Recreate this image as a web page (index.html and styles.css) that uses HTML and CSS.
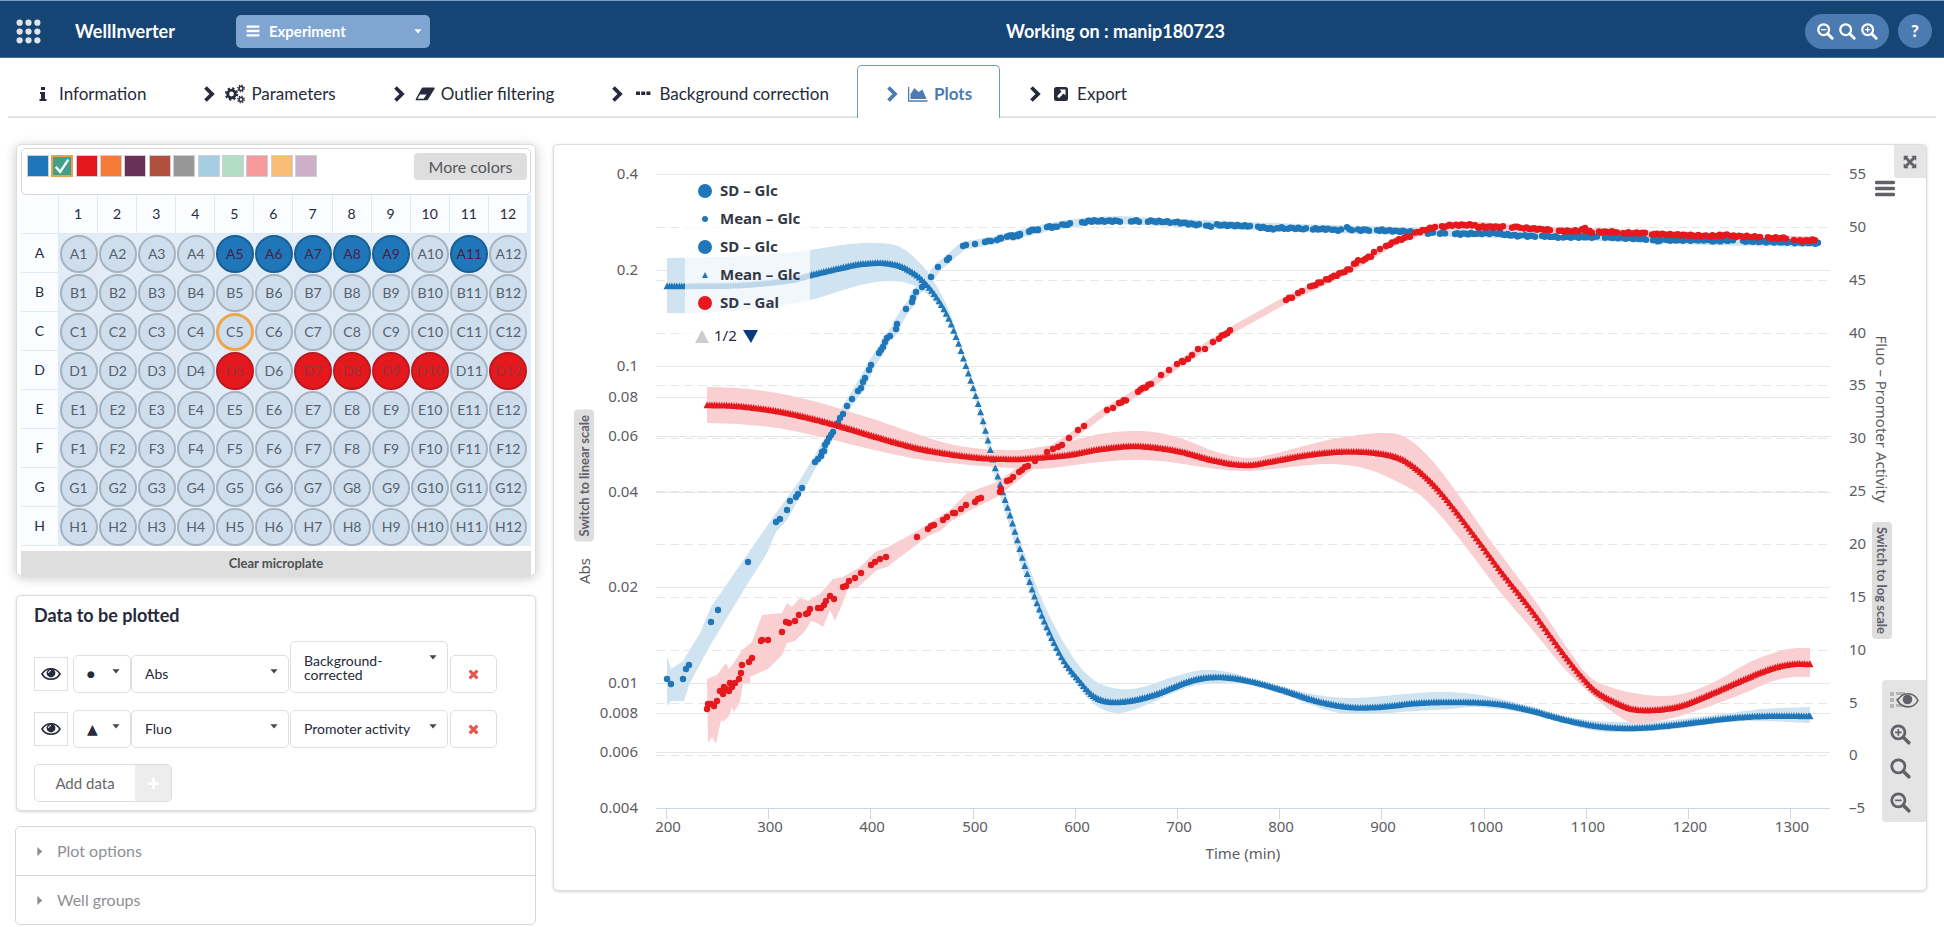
FILE: index.html
```html
<!DOCTYPE html>
<html lang="en">
<head>
<meta charset="utf-8">
<title>WellInverter</title>
<link rel="stylesheet" href="styles.css">
</head>
<body>
<svg class="sprite" aria-hidden="true">
  <symbol id="i-chevron" viewBox="0 0 20 20"><path d="M6.500 3.500l6.500 6.500-6.500 6.500" fill="none" stroke="currentColor" stroke-width="3.800"/></symbol>
  <symbol id="i-info" viewBox="0 0 20 20"><path d="M8 3h4v3H8zM7 8h5v7h1.500v2h-7v-2H8v-5H7z" fill="currentColor"/></symbol>
  <symbol id="i-gears" viewBox="0 0 20 20"><g fill="none" stroke="currentColor"><circle cx="6.500" cy="10" r="3.800" stroke-width="2.800"/><circle cx="6.500" cy="10" r="5.700" stroke-width="2" stroke-dasharray="2.240"/><circle cx="16" cy="4.500" r="2" stroke-width="1.500"/><circle cx="16" cy="4.500" r="3.300" stroke-width="1.300" stroke-dasharray="1.300"/><circle cx="16" cy="15.500" r="2" stroke-width="1.500"/><circle cx="16" cy="15.500" r="3.300" stroke-width="1.300" stroke-dasharray="1.300"/></g></symbol>
  <symbol id="i-eraser" viewBox="0 0 20 20"><path d="M8 3.500h11c.8 0 1 .8.600 1.300L13 15.500c-.4.600-.8.800-1.400.8H1.400c-.8 0-1-.8-.6-1.300L6.700 4.200c.3-.5.700-.7 1.300-.7z" fill="currentColor"/><path d="M5 10.500h6.500l-2.800 4.200H2.400z" fill="#fff"/></symbol>
  <symbol id="i-dots" viewBox="0 0 20 20"><path d="M3 7.500h4v3.500H3zM8.200 7.500h4v3.500h-4zM13.400 7.500h4v3.500h-4z" fill="currentColor"/></symbol>
  <symbol id="i-area" viewBox="0 0 20 20"><path d="M.5 3v14h19" fill="none" stroke="currentColor" stroke-width="1.500"/><path d="M2.500 15V10l4-6 4 4 4-2.500 4 9.500z" fill="currentColor"/></symbol>
  <symbol id="i-export" viewBox="0 0 20 20"><rect x="3" y="3" width="14" height="14" rx="2.500" fill="currentColor"/><path d="M8.500 5.500h6v6l-2-2-4.500 4.800-2-2L10.500 7.500z" fill="#fff"/></symbol>
  <symbol id="i-search" viewBox="0 0 20 20"><g fill="none" stroke="currentColor"><circle cx="8.500" cy="8.500" r="6" stroke-width="2.500"/><path d="M13 13l5 5" stroke-width="3.200" stroke-linecap="round"/></g></symbol>
  <symbol id="i-zoomout" viewBox="0 0 20 20"><g fill="none" stroke="currentColor"><circle cx="8.500" cy="8.500" r="6" stroke-width="2.500"/><path d="M13 13l5 5" stroke-width="3.200" stroke-linecap="round"/><path d="M5.500 8.500h6" stroke-width="1.500"/></g></symbol>
  <symbol id="i-zoomin" viewBox="0 0 20 20"><g fill="none" stroke="currentColor"><circle cx="8.500" cy="8.500" r="6" stroke-width="2.500"/><path d="M13 13l5 5" stroke-width="3.200" stroke-linecap="round"/><path d="M5.500 8.500h6M8.500 5.500v6" stroke-width="1.500"/></g></symbol>
  <symbol id="i-expand" viewBox="0 0 20 20"><path d="M3 3h5.500L7 4.800l3 3 3-3L11.500 3H17v5.500L15.200 7l-3 3 3 3 1.800-1.500V17h-5.500l1.500-1.800-3-3-3 3L8.500 17H3v-5.500L4.800 13l3-3-3-3L3 8.500z" fill="currentColor"/></symbol>
  <symbol id="i-eye" viewBox="0 0 20 20"><path d="M1 10c4-7 14-7 18 0-4 7-14 7-18 0z" fill="none" stroke="currentColor" stroke-width="1.600"/><circle cx="10" cy="9" r="4.400" fill="currentColor"/><path d="M7.500 9a2.500 2.500 0 0 1 2.500-2.500" fill="none" stroke="#fff"/></symbol>
  <symbol id="i-cross" viewBox="0 0 20 20"><path d="M4 4l12 12M16 4L4 16" fill="none" stroke="currentColor" stroke-width="4.800"/></symbol>
  <symbol id="i-plus" viewBox="0 0 20 20"><path d="M10 3v14M3 10h14" fill="none" stroke="currentColor" stroke-width="4.200"/></symbol>
  <symbol id="i-check" viewBox="0 0 20 20"><path d="M3 11l5 5.500L17 3" fill="none" stroke="currentColor" stroke-width="2.600"/></symbol>
  <symbol id="i-bars" viewBox="0 0 20 20"><path d="M2 4.500h16M2 10h16M2 15.500h16" stroke="currentColor" stroke-width="3"/></symbol>
  <symbol id="i-menu" viewBox="0 0 20 20"><path d="M1.500 3.500h17M1.500 9.500h17M1.500 15.500h17" stroke="currentColor" stroke-width="3.400" stroke-linecap="round"/></symbol>
  <symbol id="i-caret" viewBox="0 0 20 20"><path d="M4 7h12l-6 7z" fill="currentColor"/></symbol>
  <symbol id="i-caret-right" viewBox="0 0 20 20"><path d="M6 2v16l9-8z" fill="currentColor"/></symbol>
  <symbol id="i-grid" viewBox="0 0 24 24"><g fill="currentColor"><circle cx="3.500" cy="3.500" r="3"/><circle cx="12" cy="3.500" r="3"/><circle cx="20.500" cy="3.500" r="3"/><circle cx="3.500" cy="12" r="3"/><circle cx="12" cy="12" r="3"/><circle cx="20.500" cy="12" r="3"/><circle cx="3.500" cy="20.500" r="3"/><circle cx="12" cy="20.500" r="3"/><circle cx="20.500" cy="20.500" r="3"/></g></symbol>
  <symbol id="i-legend" viewBox="0 0 30 18"><path d="M1 1h4v4H1zM1 7h4v4H1zM1 13h4v4H1zM7 1h9v3H7zM7 7h4v3H7zM7 13h9v3H7z" fill="#b5b5b5"/><path d="M8.500 9.500c5-9 16-9 20.500 0-4.500 8.500-15.500 8.500-20.500 0z" fill="#e4e4e4" stroke="currentColor" stroke-width="1.600"/><circle cx="18.500" cy="8.500" r="4.800" fill="currentColor"/></symbol>
</svg>

<header class="topbar">
  <button class="apps" aria-label="Applications"><svg><use href="#i-grid"/></svg></button>
  <span class="brand">WellInverter</span>
  <button class="experiment" aria-haspopup="menu"><svg class="icon-s"><use href="#i-bars"/></svg><span>Experiment</span><svg class="icon-s caret"><use href="#i-caret"/></svg></button>
  <h1 class="title">Working on : manip180723</h1>
  <div class="zoom-pill">
    <button aria-label="Zoom out"><svg><use href="#i-zoomout"/></svg></button>
    <button aria-label="Reset zoom"><svg><use href="#i-search"/></svg></button>
    <button aria-label="Zoom in"><svg><use href="#i-zoomin"/></svg></button>
  </div>
  <button class="help" aria-label="Help">?</button>
</header>

<nav class="tabs">
  <a href="#information"><svg><use href="#i-info"/></svg>Information</a>
  <a href="#parameters"><svg><use href="#i-chevron"/></svg><svg><use href="#i-gears"/></svg>Parameters</a>
  <a href="#outliers"><svg><use href="#i-chevron"/></svg><svg><use href="#i-eraser"/></svg>Outlier filtering</a>
  <a href="#background"><svg><use href="#i-chevron"/></svg><svg><use href="#i-dots"/></svg>Background correction</a>
  <a href="#plots" class="active" aria-current="page"><svg><use href="#i-chevron"/></svg><svg><use href="#i-area"/></svg>Plots</a>
  <a href="#export"><svg><use href="#i-chevron"/></svg><svg><use href="#i-export"/></svg>Export</a>
</nav>

<main class="layout">
  <div class="sidebar">
    <section class="card plate-card">
      <div class="palette">
        <div class="swatches" id="swatches"></div>
        <button class="more">More colors</button>
      </div>
      <table class="plate" id="plate"></table>
      <button class="clear">Clear microplate</button>
    </section>

    <section class="card data-card">
      <h2>Data to be plotted</h2>
      <div class="data-row">
        <button class="eye" aria-label="Toggle Abs"><svg><use href="#i-eye"/></svg></button>
        <div class="drop shape"><select aria-label="Abs symbol"><option>●</option><option>▲</option></select><svg><use href="#i-caret"/></svg></div>
        <div class="drop"><select aria-label="First data type"><option>Abs</option><option>Fluo</option></select><svg><use href="#i-caret"/></svg></div>
        <div class="drop tall"><select aria-label="First data quantity"><option>Background-corrected</option><option>Promoter activity</option></select><span aria-hidden="true">Background-corrected</span><svg><use href="#i-caret"/></svg></div>
        <button class="remove" aria-label="Remove Abs"><svg><use href="#i-cross"/></svg></button>
      </div>
      <div class="data-row">
        <button class="eye" aria-label="Toggle Fluo"><svg><use href="#i-eye"/></svg></button>
        <div class="drop shape triangle"><select aria-label="Fluo symbol"><option>▲</option><option>●</option></select><svg><use href="#i-caret"/></svg></div>
        <div class="drop"><select aria-label="Second data type"><option>Fluo</option><option>Abs</option></select><svg><use href="#i-caret"/></svg></div>
        <div class="drop"><select aria-label="Second data quantity"><option>Promoter activity</option></select><svg><use href="#i-caret"/></svg></div>
        <button class="remove" aria-label="Remove Fluo"><svg><use href="#i-cross"/></svg></button>
      </div>
      <button class="add"><span>Add data</span><span class="add-icon"><svg><use href="#i-plus"/></svg></span></button>
    </section>

    <section class="accordion">
      <button aria-expanded="false"><svg><use href="#i-caret-right"/></svg>Plot options</button>
      <button aria-expanded="false"><svg><use href="#i-caret-right"/></svg>Well groups</button>
    </section>
  </div>

  <section class="card chart-card">
    <svg class="chart" id="chart" viewBox="554 145 1372 745" role="img" aria-label="Abs and promoter activity against time"></svg>
    <button class="expand" aria-label="Full screen"><svg><use href="#i-expand"/></svg></button>
    <button class="menu" aria-label="Chart menu"><svg><use href="#i-menu"/></svg></button>
    <button class="scale scale-left">Switch to linear scale</button>
    <button class="scale scale-right">Switch to log scale</button>
    <div class="tools">
      <button class="wide" aria-label="Show or hide legend"><svg><use href="#i-legend"/></svg></button>
      <button aria-label="Zoom in chart"><svg><use href="#i-zoomin"/></svg></button>
      <button aria-label="Reset chart zoom"><svg><use href="#i-search"/></svg></button>
      <button aria-label="Zoom out chart"><svg><use href="#i-zoomout"/></svg></button>
    </div>
  </section>
</main>
<script src="script.js"></script>
</body>
</html>
```

FILE: styles.css
```css
* { box-sizing: border-box; }
body { margin: 0; background: #fff; color: #262a3a; font: 17px/20px Lato, "Open Sans", sans-serif; }
button { font: inherit; color: inherit; border: 0; background: none; padding: 0; cursor: pointer; }
.sprite { position: absolute; width: 0; height: 0; }
h1, h2 { margin: 0; }

.topbar { position: relative; display: flex; align-items: center; height: 58px; padding: 4px 12px 0 16px; background: #154475; border-top: 1px solid #7f9fb9; border-bottom: 1px solid #4c6d8c; color: #fff; }
.apps svg { display: block; width: 25px; height: 25px; color: #dde4ea; }
.brand { margin-left: 34px; font-size: 18px; font-weight: 700; }
.experiment { display: flex; align-items: center; gap: 8px; width: 194px; height: 33px; margin-left: 61px; padding: 0 6px 0 9px; border-radius: 5px; background: #7fa5d0; font-size: 15px; font-weight: 700; }
.icon-s { width: 16px; height: 16px; }
.experiment .caret { width: 12px; height: 12px; margin-left: auto; }
.title { position: absolute; left: 0; right: 0; margin-left: 287px; text-align: center; font-size: 18px; line-height: 20px; pointer-events: none; }
.zoom-pill { display: flex; align-items: center; justify-content: center; gap: 4px; width: 84px; height: 35px; margin-left: auto; border-radius: 18px; background: #4b7bb0; }
.zoom-pill svg { display: block; width: 18px; height: 18px; }
.help { width: 34px; height: 34px; margin-left: 9px; border-radius: 50%; background: #4b7bb0; font-size: 17px; font-weight: 900; }

.tabs { display: flex; margin: 7px 8px 0; border-bottom: 2px solid #e2e3e5; }
.tabs a { display: flex; align-items: center; gap: 6px; height: 53px; margin-bottom: -2px; padding: 3px 27px 0 24px; border: 1px solid transparent; border-bottom: 0; color: #262a3a; text-decoration: none; }
.tabs svg { width: 20px; height: 20px; flex: none; }
.tabs .active { border-color: #6f9bc6; border-radius: 5px 5px 0 0; background: #fff; color: #4b7bb0; font-weight: 700; }

.layout { display: grid; grid-template-columns: 520px minmax(0, 1fr); align-items: start; gap: 17px; padding: 26px 17px 0 16px; }
.sidebar { display: flex; flex-direction: column; }
.card { border: 1px solid #dcdddf; border-radius: 5px; background: #fff; box-shadow: 0 1px 3px #d4d4d5; }

.plate-card { padding: 3px 4px 0; box-shadow: 0 2px 12px #c9c9cb; }
.palette { display: flex; justify-content: space-between; align-items: flex-start; height: 47px; padding: 4px 3px 0 5px; border: 1px solid #d4d6da; border-radius: 5px; }
.swatches { display: flex; justify-content: space-between; width: 290px; padding-top: 2px; }
.swatches button { width: 22px; height: 22px; border: 1px solid #cfcfdc; color: #fff; background: var(--c); }
.swatches .on { border: 2px solid #e9a04c; }
.swatches svg { display: block; width: 18px; height: 18px; }
.more { width: 113px; height: 27px; border-radius: 4px; background: #dededf; color: #55565a; font-size: 16px; }
.plate { width: 100%; border-collapse: separate; border-spacing: 0; border-right: 3px solid #e2ecf6; table-layout: fixed; background: #e2ecf6; font-size: 14px; }
.plate th { height: 39px; padding: 0; border-bottom: 1px solid #dfe9f3; border-right: 1px solid #dfe9f3; background: #fbfcff; font-weight: 400; }
.plate th:first-child { width: 38px; }
.plate td { height: 39px; padding: 0; text-align: center; }
.well { display: block; width: 38px; height: 38px; margin: auto; border: 2px solid #a5b2bf; border-radius: 50%; background: #cfdeec; color: #56616d; font-size: 14px; line-height: 20px; }
.well.blue { border-color: #175f95; background: #1f77b9; color: #4d1c45; }
.well.red { border-color: #b91a20; background: #e5191d; color: #96343a; }
.well.hover { border: 3px solid #eda64e; }
.clear { display: block; width: 100%; height: 24px; margin-top: 5px; background: #dededf; color: #4f5053; font-size: 13px; font-weight: 700; }

.data-card { margin-top: 19px; padding: 8px 17px 8px; }
.data-card h2 { font-size: 18px; line-height: 22px; }
.data-row { display: flex; align-items: flex-end; height: 52px; margin-top: 3px; }
h2 + .data-row { margin-top: 15px; }
.eye { width: 34px; height: 34px; margin: 0 5px 2px 0; border: 1px solid #dedfe1; }
.eye svg { display: block; width: 20px; height: 20px; margin: auto; }
.drop { position: relative; width: 158px; height: 38px; font-size: 14px; margin-right: 1px; }
.drop.shape { width: 58px; margin-right: 0; }
.drop select { width: 100%; height: 100%; padding: 0 13px; border: 1px solid #dedfe1; border-radius: 5px; background: none; color: #262a3a; font: inherit; appearance: none; }
.shape select { font: 9px "DejaVu Sans", sans-serif; }
.triangle select { font-size: 14px; }
.drop svg { position: absolute; right: 9px; top: 10px; width: 12px; height: 12px; color: #444750; pointer-events: none; }
.drop.tall { height: 52px; }
.drop.tall select { color: transparent; }
.tall span { position: absolute; left: 14px; right: 46px; top: 13px; line-height: 14px; pointer-events: none; }
.remove { width: 47px; height: 38px; margin-left: 1px; border: 1px solid #dedfe1; border-radius: 5px; }
.remove svg { display: block; width: 13px; height: 13px; margin: auto; color: #e3574f; }
.add { display: flex; width: 138px; height: 38px; margin-top: 16px; border: 1px solid #dcdddf; border-radius: 5px; color: #66676b; font-size: 15px; overflow: hidden; }
.add > span { flex: 1; align-self: center; }
.add .add-icon { display: grid; place-items: center; flex: 0 0 36px; align-self: stretch; background: #ededee; color: #fff; }
.add-icon svg { width: 15px; height: 15px; }

.accordion { margin: 15px 0 0 -1px; border: 1px solid #d6d7d9; border-radius: 5px; }
.accordion button { display: flex; align-items: center; gap: 12px; width: 100%; height: 48px; padding-left: 18px; color: #8e8f93; font-size: 16px; }
.accordion button + button { height: 49px; border-top: 1px solid #d6d7d9; }
.accordion svg { width: 11px; height: 11px; }

.chart-card { position: relative; }
.chart { display: block; width: 100%; height: auto; }
.chart-card button { color: #606268; }
.expand { position: absolute; top: 0; right: 0; width: 32px; height: 33px; border-radius: 0 4px 0 4px; background: #e5e5e6; }
.expand svg { display: block; width: 18px; height: 18px; margin: auto; }
.menu { position: absolute; top: 34px; right: 30px; }
.menu svg { display: block; width: 22px; height: 20px; }
.scale { position: absolute; padding: 5px 0; border-radius: 4px; background: #dededf; writing-mode: vertical-rl; font-size: 13px; font-weight: 700; line-height: 20px; }
.scale-left { left: 20px; top: 265px; transform: rotate(180deg); }
.scale-right { right: 34px; top: 377px; }
.tools { position: absolute; right: 0; bottom: 68px; display: flex; flex-direction: column; gap: 12px; width: 44px; padding: 9px 7px; border-radius: 4px 0 0 4px; background: #e4e4e5; }
.tools button { width: 22px; height: 22px; }
.tools .wide { width: 30px; }
.tools svg { display: block; width: 22px; height: 22px; }
.tools .wide svg { width: 30px; height: 20px; }

.label { fill: #5c5d61; font: 15px "Noto Sans", sans-serif; }
.end { text-anchor: end; }
.mid { text-anchor: middle; }
.legend { fill: #333845; font: 700 15px "Noto Sans", sans-serif; }
.page { fill: #262a3a; font: 15px "Noto Sans", sans-serif; }
.blue-fill { fill: #1f77b9; }
.red-fill { fill: #e5191d; }
.blue-band { fill: #cfe3f1; }
.red-band { fill: #f9cfd1; }
.blue-thread { fill: none; stroke: #cfe3f1; stroke-width: 8; }
.red-thread { fill: none; stroke: #f9cfd1; stroke-width: 7; }
.grid { stroke: #e6e6e6; stroke-width: 1; }
.dash { stroke-dasharray: 9 5; }
.axis { stroke: #ccd6eb; stroke-width: 1; }
```

FILE: script.js
```js
/* Palette */
const colors = ['#1f77b9', '#40a08a', '#e5191d', '#f57c36', '#6a3157', '#b0503f', '#979797', '#a5cee3', '#b2dec6', '#f69a9b', '#f8bd74', '#cdb0c8'];
document.getElementById('swatches').innerHTML = colors.map((c, i) =>
  `<button style="--c:${c}" aria-label="Color ${i + 1}"${i === 1 ? ' class="on"' : ''}>${i === 1 ? '<svg><use href="#i-check"/></svg>' : ''}</button>`).join('');

/* Microplate */
const state = { C5: 'hover' };
['A5', 'A6', 'A7', 'A8', 'A9', 'A11'].forEach(w => { state[w] = 'blue'; });
['D5', 'D7', 'D8', 'D9', 'D10', 'D12'].forEach(w => { state[w] = 'red'; });
const cols = Array.from({ length: 12 }, (_, i) => i + 1);
document.getElementById('plate').innerHTML =
  `<thead><tr><th></th>${cols.map(c => `<th scope="col">${c}</th>`).join('')}</tr></thead><tbody>` +
  [...'ABCDEFGH'].map(r => `<tr><th scope="row">${r}</th>${cols.map(c =>
    `<td><button class="well ${state[r + c] || ''}">${r}${c}</button></td>`).join('')}</tr>`).join('') + '</tbody>';

/* Chart */
const chart = document.getElementById('chart');
const out = [];
const line = (x1, y1, x2, y2, c) => out.push(`<line x1="${x1}" y1="${y1}" x2="${x2}" y2="${y2}" class="${c}"/>`);
const text = (x, y, s, c, extra = '') => out.push(`<text x="${x}" y="${y}" class="${c}" ${extra}>${s}</text>`);

[['0.4', 174], ['0.2', 270], ['0.1', 366], ['0.08', 397], ['0.06', 436], ['0.04', 492], ['0.02', 587], ['0.01', 683], ['0.008', 713], ['0.006', 752], ['0.004', 808]]
  .forEach(([s, y]) => { if (y < 808) line(656, y + .5, 1830, y + .5, 'grid'); text(638, y + 5, s, 'label end'); });
for (let i = 0; i <= 12; i++) {
  const y = Math.round(174 + i * 52.85);
  if (i && i < 12) line(656, y + .5, 1830, y + .5, 'grid dash');
  text(1849, y + 5, String(55 - 5 * i).replace('-', '–'), 'label');
}
line(656, 808.5, 1830, 808.5, 'axis');
for (let i = 0; i < 12; i++) {
  const x = Math.round(666 + i * 102.2);
  line(x + .5, 808, x + .5, 819, 'axis');
  text(x + 2, 832, 200 + 100 * i, 'label mid');
}
text(1243, 859, 'Time (min)', 'label mid');
text(0, 0, 'Abs', 'label mid', 'transform="translate(590 571) rotate(-90)"');
text(0, 0, 'Fluo – Promoter Activity', 'label mid', 'transform="translate(1876 419) rotate(90)"');

/* Smooth interpolation through sorted points */
function curve(pts) {
  const m = pts.map((p, i) => {
    const a = pts[Math.max(0, i - 1)], b = pts[Math.min(pts.length - 1, i + 1)];
    return (b[1] - a[1]) / (b[0] - a[0]);
  });
  return x => {
    let i = 0;
    while (i < pts.length - 2 && x > pts[i + 1][0]) i++;
    const [x0, y0] = pts[i], [x1, y1] = pts[i + 1], h = x1 - x0, t = (x - x0) / h;
    return (2 * t ** 3 - 3 * t ** 2 + 1) * y0 + (t ** 3 - 2 * t ** 2 + t) * h * m[i] + (-2 * t ** 3 + 3 * t ** 2) * y1 + (t ** 3 - t ** 2) * h * m[i + 1];
  };
}
const pairs = s => s.split(' ').map(p => p.split(',').map(Number));
function sample(pts, step) {
  const f = curve(pts), end = pts[pts.length - 1][0], res = [];
  for (let x = pts[0][0]; x < end; x += step) res.push([x, f(x)]);
  res.push(pts[pts.length - 1]);
  return res;
}
const join = pts => pts.map(p => p[0].toFixed(1) + ',' + p[1].toFixed(1)).join(' ');
const band = (up, low, c) => out.push(`<polygon class="${c}" points="${join(sample(pairs(up), 3))} ${join(sample(pairs(low), 3).reverse())}"/>`);
const poly = (s, c) => out.push(`<polygon class="${c}" points="${s}"/>`);
const triangles = (s, c) => out.push(`<path class="${c}" d="${sample(pairs(s), 2.45).map(([x, y]) => `M${x.toFixed(1)} ${(y - 3.6).toFixed(1)}l3.500 6.800h-7z`).join('')}"/>`);
function dots(points, runs, c) {
  const all = pairs(points);
  runs.forEach(([x1, y1, x2, y2], k) => {
    const n = Math.max(1, Math.round((x2 - x1) / 2.6));
    for (let i = 0; i <= n; i++) all.push([x1 + (x2 - x1) * i / n, y1 + (y2 - y1) * i / n + Math.sin(i * 2.3 + k) * .8]);
  });
  out.push(all.map(p => `<circle cx="${p[0].toFixed(1)}" cy="${p[1].toFixed(1)}" r="3.200" class="${c}"/>`).join(''));
}

const absBlue = '667,679 671,684 683,679 686,669 689,665 711,622 718,610 748,562 776,522 780,519 787,510 790,501 796,497 798,494 802,488 815,462 818,459 821,456 822,452 824,451 825,445 827,442 829,438 831,435 833,432 838,423 840,418 843,414 847,406 852,399 858,391 861,388 863,382 865,378 869,370 871,365 879,353 881,350 883,347 885,342 887,338 890,336 896,329 897,324 906,309 912,302 913,298 916,292 922,287 931,277 938,267 947,260 949,258 963,246 966,245 975,244 985,242 988,241 991,241 997,240 1001,238 1009,236 1013,237 1018,236 1020,234 1030,231 1034,230 1038,230';
const absRed = '707,709 708,704 711,704 714,706 717,701 720,691 723,694 724,687 726,689 729,691 730,683 732,687 735,683 739,679 741,673 742,665 749,662 752,658 761,641 762,640 768,640 782,632 786,622 789,623 795,621 799,615 806,614 808,613 810,609 818,608 821,608 824,605 826,601 830,596 834,599 843,587 846,586 849,581 855,578 861,573 871,565 875,562 880,559 886,557 917,537 928,529 931,526 934,525 943,520 947,517 953,513 955,513 961,509 966,505 975,502 978,499 981,498 1000,492 1001,489 1007,481 1010,480 1013,477 1019,472 1022,470 1025,467 1028,466 1035,461 1047,452 1053,449 1058,447 1062,445 1069,438 1078,430 1084,426 1107,410 1113,408 1161,375 1169,370 1177,364 1182,361 1183,362 1188,359 1192,355 1198,349 1205,349 1213,342 1298,293 1302,291 1374,252 1380,249 1386,246 1585,228 1794,240';

poly('667,656 671,669 683,661 700,633 711,607 740,565 776,513 800,480 815,455 870,360 912,294 914,302 872,370 818,464 800,497 787,520 776,532 766,555 750,580 711,644 689,685 684,701 671,701 667,706', 'blue-band');
out.push(`<polyline class="blue-thread" points="${absBlue.slice(absBlue.indexOf('815,'))} 1048,227 1090,221 1120,220 1200,224 1300,228 1400,231 1500,234 1600,237 1700,241 1815,243"/>`);
band('667,258 717,257 763,255 810,250 850,244 877,243 900,247 920,263 933,280 950,313 963,353 980,406 995,460 1015,523 1020,540 1038,590 1053,623 1077,663 1097,682 1120,689 1143,687 1173,677 1203,670 1233,673 1257,681 1283,687 1317,695 1350,698 1383,696 1417,693 1447,692 1480,695 1530,706 1563,716 1597,721 1630,722 1663,721 1697,717 1730,713 1763,709 1810,707',
  '667,313 700,313 763,308 810,300 850,288 870,283 893,281 915,286 933,300 948,322 962,357 978,410 993,470 1010,528 1030,592 1050,643 1067,670 1083,693 1100,708 1117,713 1133,710 1153,702 1173,693 1193,686 1220,683 1250,684 1283,694 1317,707 1340,713 1370,714 1417,711 1450,709 1480,707 1530,714 1563,723 1597,731 1630,732 1663,730 1697,726 1730,722 1763,721 1810,723', 'blue-band');
poly('707,679 717,675 722,668 726,663 729,669 733,664 742,650 752,642 762,615 782,613 787,603 792,607 800,598 808,601 821,593 833,579 843,577 860,567 875,552 886,548 917,531 950,510 967,493 997,482 1047,446 1047,458 997,497 967,512 950,522 940,531 928,536 887,567 877,570 857,588 848,589 843,602 835,621 830,610 823,627 817,623 811,621 805,631 795,641 787,643 782,655 768,669 763,671 750,677 750,683 743,683 740,702 734,712 732,707 729,716 723,722 721,720 716,744 712,737 708,743', 'red-band');
band('707,387 737,388 777,393 817,402 870,418 917,434 950,444 983,449 1017,450 1040,447 1067,442 1100,434 1133,431 1160,433 1183,439 1217,452 1247,458 1273,454 1300,447 1333,439 1367,434 1387,433 1403,436 1420,448 1440,470 1467,507 1490,540 1520,580 1543,612 1570,652 1590,677 1613,688 1640,694 1665,696 1690,692 1720,679 1750,662 1780,651 1797,648 1810,648',
  '707,423 737,424 777,428 817,436 870,449 917,459 950,463 983,466 1010,468 1040,469 1067,466 1100,462 1133,460 1160,461 1183,464 1217,469 1247,471 1273,469 1300,466 1333,464 1367,469 1400,483 1420,495 1440,515 1465,546 1500,592 1530,627 1563,667 1583,687 1600,702 1617,715 1633,723 1653,722 1680,716 1713,705 1747,692 1773,681 1793,677 1810,677', 'red-band');
out.push('<polyline class="red-thread" points="1047,452 1069,438 1107,410 1150,385 1180,363 1230,331 1286,300 1350,269 1392,243 1435,227 1475,225 1550,230 1650,234 1815,240"/>');

dots(absBlue, [[1000, 238, 1001, 238], [1007, 236, 1020, 235], [1029, 231, 1038, 229], [1047, 227, 1057, 227], [1062, 225, 1070, 224], [1082, 223, 1088, 221], [1089, 221, 1120, 221], [1131, 221, 1139, 221], [1148, 221, 1170, 222], [1175, 222, 1199, 225], [1206, 226, 1211, 226], [1217, 225, 1250, 226], [1258, 227, 1273, 229], [1277, 228, 1284, 228], [1288, 228, 1306, 229], [1313, 229, 1328, 229], [1332, 230, 1341, 230], [1347, 228, 1352, 230], [1358, 230, 1369, 230], [1377, 230, 1413, 232], [1428, 233, 1433, 233], [1440, 233, 1445, 233], [1455, 234, 1500, 233], [1500, 234, 1520, 236], [1525, 236, 1535, 236], [1542, 236, 1558, 237], [1563, 237, 1597, 237], [1605, 237, 1646, 239], [1653, 240, 1660, 241], [1665, 240, 1706, 240], [1710, 241, 1733, 240], [1743, 241, 1818, 243]], 'blue-fill');
triangles('667,286 690,286 740,285 790,280 810,275 840,268 860,264 884,263 900,266 915,274 926,284 937,298 948,317 958,342 963,357 980,410 995,467 1013,525 1023,560 1033,592 1045,623 1062,658 1077,678 1095,697 1117,702 1150,696 1193,680 1220,677 1250,681 1283,690 1317,701 1350,707 1377,707 1417,703 1460,702 1500,704 1530,710 1563,719 1597,726 1630,728 1663,726 1697,722 1730,718 1763,716 1810,716', 'blue-fill');
triangles('707,405 737,406 777,411 810,418 840,426 877,437 917,448 950,454 983,458 1017,459 1033,458 1067,455 1100,449 1133,446 1160,448 1183,452 1217,461 1247,465 1273,461 1300,456 1333,452 1367,452 1393,456 1407,462 1427,478 1447,500 1480,543 1500,570 1530,608 1563,653 1583,678 1597,692 1617,703 1633,709 1653,710 1680,706 1713,693 1747,678 1773,668 1793,664 1810,664', 'red-fill');
dots(absRed, [[1119, 403, 1126, 400], [1138, 391, 1151, 384], [1219, 338, 1230, 331], [1286, 300, 1292, 297], [1310, 287, 1321, 282], [1326, 280, 1350, 269], [1354, 264, 1358, 261], [1363, 260, 1371, 256], [1390, 244, 1392, 243], [1396, 241, 1410, 236], [1415, 233, 1435, 227], [1442, 227, 1452, 225], [1456, 225, 1475, 225], [1478, 227, 1503, 227], [1512, 227, 1520, 227], [1524, 228, 1550, 230], [1559, 231, 1578, 231], [1582, 230, 1592, 232], [1599, 232, 1617, 232], [1623, 233, 1645, 233], [1652, 234, 1706, 236], [1710, 236, 1727, 235], [1731, 236, 1760, 237], [1768, 238, 1786, 238], [1800, 241, 1815, 240]], 'red-fill');

/* Legend */
out.push('<rect x="685" y="180" width="125" height="170" fill="#fff" fill-opacity=".7"/>');
[['SD – Glc', 191, 'blue', 7], ['Mean – Glc', 219, 'blue', 3], ['SD – Glc', 247, 'blue', 7], ['Mean – Glc', 275, 'blue', 0], ['SD – Gal', 303, 'red', 7]].forEach(([s, y, c, r]) => {
  out.push(r ? `<circle cx="705" cy="${y}" r="${r}" class="${c}-fill"/>` : `<path d="M705 ${y - 3}l3 6h-6z" class="${c}-fill"/>`);
  text(720, y + 5, s, 'legend');
});
out.push('<path d="M695 343h14l-7-13z" fill="#ccc"/><path d="M743 330h15l-7 13z" fill="#083a80"/>');
text(714, 341, '1/2', 'page');
chart.innerHTML = out.join('');
```
